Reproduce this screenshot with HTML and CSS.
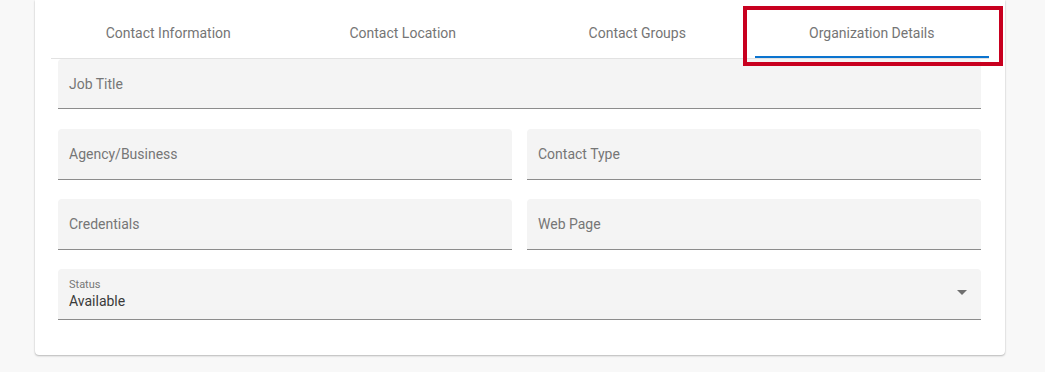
FILE: index.html
```html
<!DOCTYPE html>
<html>
<head>
<meta charset="utf-8">
<link rel="stylesheet" href="styles.css">
</head>
<body>
<div class="page">
  <div class="card">
    <div class="tabs">
      <div class="tab">Contact Information</div>
      <div class="tab">Contact Location</div>
      <div class="tab">Contact Groups</div>
      <div class="tab active">Organization Details</div>
    </div>
    <div class="form">
      <div class="row one first">
        <div class="field"><span class="placeholder">Job Title</span></div>
      </div>
      <div class="row two">
        <div class="field"><span class="placeholder">Agency/Business</span></div>
        <div class="field"><span class="placeholder">Contact Type</span></div>
      </div>
      <div class="row two">
        <div class="field"><span class="placeholder">Credentials</span></div>
        <div class="field"><span class="placeholder">Web Page</span></div>
      </div>
      <div class="row one">
        <div class="field select">
          <div class="select-text">
            <span class="small-label">Status</span>
            <span class="value">Available</span>
          </div>
          <span class="arrow"></span>
        </div>
      </div>
    </div>
  </div>
</div>
</body>
</html>
```
FILE: styles.css
```css
html, body {
  margin: 0;
  padding: 0;
}
body {
  background: #f8f8f8;
  font-family: Roboto, "Liberation Sans", sans-serif;
  height: 372px;
  overflow: hidden;
}
.page {
  padding: 0 40px 0 35px;
}
.card {
  width: 938px;
  background: #fff;
  border-radius: 0 0 4px 4px;
  box-shadow: 0 1px 2px rgba(0,0,0,0.25), 0 0 1px rgba(0,0,0,0.12);
  padding: 0 16px 35px 16px;
}
.tabs {
  display: grid;
  grid-template-columns: repeat(4, 1fr);
  height: 58px;
  border-bottom: 1px solid #e2e2e2;
}
.tab {
  position: relative;
  display: flex;
  align-items: center;
  justify-content: center;
  padding-top: 8px;
  font-size: 14px;
  font-weight: 400;
  color: #757575;
}
.tab.active::before {
  content: "";
  position: absolute;
  left: 0;
  right: 0;
  bottom: 0;
  height: 2px;
  background: #0b74cf;
}
.tab.active::after {
  content: "";
  position: absolute;
  top: 6px;
  left: -12px;
  right: -14px;
  bottom: -8px;
  border: 4px solid #c8001f;
}
.form {
  padding: 0 8px 0 7px;
  display: flex;
  flex-direction: column;
  gap: 19px;
}
.row {
  display: grid;
  gap: 15px;
}
.row.one { grid-template-columns: 1fr; }
.row.two { grid-template-columns: 1fr 1fr; }
.row.first { margin-bottom: 1px; }
.field {
  height: 50px;
  background: #f4f4f4;
  border-bottom: 1px solid #8c8c8c;
  border-radius: 4px 4px 0 0;
  display: flex;
  align-items: center;
  padding: 0 11px;
}
.row.first .field {
  height: 49px;
}
.placeholder {
  font-size: 14px;
  color: #767676;
}
.select {
  justify-content: space-between;
  padding-right: 14px;
}
.select-text {
  display: flex;
  flex-direction: column;
  margin-top: -1px;
}
.small-label {
  font-size: 11px;
  color: #777;
  line-height: 13px;
}
.value {
  font-size: 14px;
  color: #3a3a3a;
  line-height: 18px;
  margin-top: 1px;
}
.arrow {
  width: 0;
  height: 0;
  border-left: 5px solid transparent;
  border-right: 5px solid transparent;
  border-top: 5px solid #6f6f6f;
  margin-bottom: 4px;
}
```
